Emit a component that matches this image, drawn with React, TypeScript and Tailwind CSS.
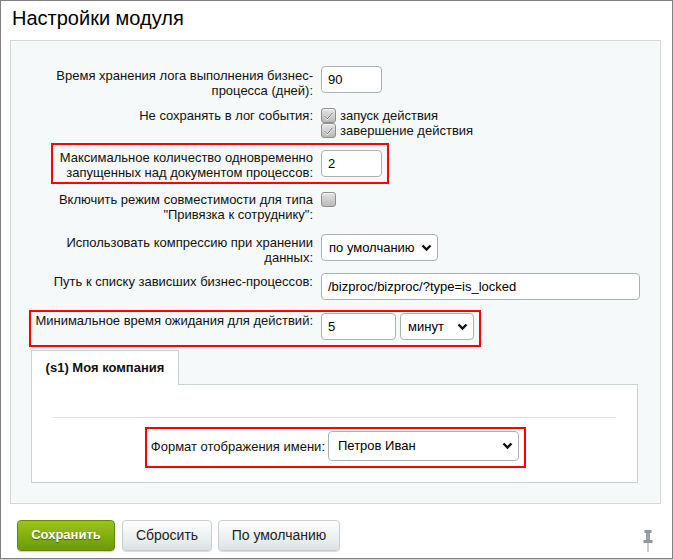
import React from "react";

const font = "font-['Liberation_Sans',Arial,sans-serif]";

function Chevron() {
  return (
    <svg width="11" height="8" viewBox="0 0 11 8" className="shrink-0">
      <path d="M1.5 1.5 L5.5 5.5 L9.5 1.5" fill="none" stroke="#111" strokeWidth="2.4" />
    </svg>
  );
}

function Checkbox({ checked }: { checked?: boolean }) {
  return (
    <span className="flex h-[15px] w-[15px] items-center justify-center rounded-[3px] border border-[#8f8f8f] bg-gradient-to-b from-[#e6e6e6] to-[#b9b9b9] shadow-[inset_0_1px_0_#f4f4f4]">
      {checked && (
        <svg width="11" height="10" viewBox="0 0 11 10">
          <path d="M1.5 5 L4.3 7.8 L9.5 1.8" fill="none" stroke="#f8f8f8" strokeWidth="2" />
          <path d="M1.5 5 L4.3 7.8 L9.5 1.8" fill="none" stroke="#5f5f5f" strokeWidth="1" />
        </svg>
      )}
    </span>
  );
}

function Input({ value, w }: { value: string; w: string }) {
  return (
    <div
      className={`${w} flex h-[27px] items-center rounded-[4px] border border-[#a9b3b6] bg-white pl-[6px] text-[13px] text-black`}
    >
      {value}
    </div>
  );
}

function Select({ value, w, h = "h-[27px]", pl = "pl-[7px]" }: { value: string; w: string; h?: string; pl?: string }) {
  return (
    <div
      className={`${w} ${h} ${pl} flex items-center justify-between rounded-[4px] border border-[#a9b3b6] bg-white pr-[5px] text-[13px] text-black`}
    >
      <span>{value}</span>
      <Chevron />
    </div>
  );
}

function Row({
  label,
  pt = "pt-0",
  mt,
  children,
}: {
  label: React.ReactNode;
  pt?: string;
  mt: string;
  children: React.ReactNode;
}) {
  return (
    <div className={`flex items-start ${mt}`}>
      <div className={`w-[284px] text-right text-[13px] leading-[15px] text-[#111] ${pt}`}>{label}</div>
      <div className="ml-[8px]">{children}</div>
    </div>
  );
}

function Pin() {
  return (
    <svg width="10" height="22" viewBox="0 0 10 22">
      <rect x="1.5" y="0" width="7" height="3" fill="#8e999c" />
      <rect x="3" y="3" width="4" height="7" fill="#9aa4a7" />
      <rect x="0.5" y="10" width="9" height="3" fill="#8e999c" />
      <rect x="4.5" y="13" width="1" height="9" fill="#8e999c" />
    </svg>
  );
}

export default function App() {
  return (
    <div className={`relative h-[559px] w-[673px] overflow-hidden border border-[#808080] bg-white ${font}`}>
      <div className="h-[39px] pl-[11px] pt-[5px] text-[20px] leading-[24px] text-black">Настройки модуля</div>

      <div className="ml-[9px] h-[464px] w-[651px] border border-[#d2d9db] bg-[#f5f9f9] pl-[18px] pt-[25px]">
        <Row
          mt="mt-0"
          pt="pt-[2px]"
          label={
            <>
              Время хранения лога выполнения бизнес-
              <br />
              процесса (дней):
            </>
          }
        >
          <Input value="90" w="w-[61px]" />
        </Row>

        <Row mt="mt-[10px]" label="Не сохранять в лог события:">
          <div className="flex flex-col text-[13px] leading-[15px] text-[#111]">
            <label className="flex h-[15px] items-center gap-[4px]">
              <Checkbox checked />
              запуск действия
            </label>
            <label className="flex h-[15px] items-center gap-[4px]">
              <Checkbox checked />
              завершение действия
            </label>
          </div>
        </Row>

        <Row
          mt="mt-[12px]"
          label={
            <>
              Максимальное количество одновременно
              <br />
              запущенных над документом процессов:
            </>
          }
        >
          <Input value="2" w="w-[61px]" />
        </Row>

        <Row
          mt="mt-[12px]"
          label={
            <>
              Включить режим совместимости для типа
              <br />
              "Привязка к сотруднику":
            </>
          }
        >
          <div className="flex h-[15px] items-center">
            <Checkbox />
          </div>
        </Row>

        <Row
          mt="mt-[12px]"
          pt="pt-[1px]"
          label={
            <>
              Использовать компрессию при хранении
              <br />
              данных:
            </>
          }
        >
          <Select value="по умолчанию" w="w-[117px]" />
        </Row>

        <Row mt="mt-[8px]" pt="pt-[1px]" label="Путь к списку зависших бизнес-процессов:">
          <Input value="/bizproc/bizproc/?type=is_locked" w="w-[319px]" />
        </Row>

        <Row mt="mt-[13px]" label={<span className="whitespace-nowrap">Минимальное время ожидания для действий:</span>}>
          <div className="flex gap-[4px]">
            <Input value="5" w="w-[75px]" />
            <Select value="минут" w="w-[74px]" />
          </div>
        </Row>

        <div className="ml-[2px] mt-[10px] w-[607px]">
          <div className="relative z-10 -mb-px flex h-[35px] w-[148px] items-center justify-center border border-b-0 border-[#c9d1d4] bg-white text-[13px] font-bold text-[#111]">
            (s1) Моя компания
          </div>
          <div className="h-[99px] border border-[#c9d1d4] bg-white pt-[32px]">
            <div className="ml-[21px] h-px w-[563px] bg-[#dde2e3]" />
            <div className="mt-[13px] flex items-center">
              <div className="w-[293px] text-right text-[13px] leading-[15px] text-[#111]">Формат отображения имени:</div>
              <div className="ml-[3px]">
                <Select value="Петров Иван" w="w-[191px]" h="h-[30px]" pl="pl-[9px]" />
              </div>
            </div>
          </div>
        </div>
      </div>

      <div className="flex items-center pl-[16px] pt-[14px]">
        <button
          type="button"
          className="h-[31px] w-[98px] rounded-[4px] border border-[#5f8a06] bg-gradient-to-b from-[#9dc41a] to-[#6c9a07] text-[13px] font-bold text-white [text-shadow:0_1px_1px_rgba(0,0,0,0.45)] shadow-[0_1px_1px_rgba(0,0,0,0.2)]"
        >
          Сохранить
        </button>
        <button
          type="button"
          className="ml-[7px] h-[31px] w-[90px] rounded-[4px] border border-[#c5ced1] bg-gradient-to-b from-white to-[#dce3e5] text-[14px] text-[#222] shadow-[0_1px_1px_rgba(0,0,0,0.15)]"
        >
          Сбросить
        </button>
        <button
          type="button"
          className="ml-[6px] h-[31px] w-[122px] rounded-[4px] border border-[#c5ced1] bg-gradient-to-b from-white to-[#dce3e5] text-[14px] text-[#222] shadow-[0_1px_1px_rgba(0,0,0,0.15)]"
        >
          По умолчанию
        </button>
        <div className="ml-auto mr-[19px] mt-[12px]">
          <Pin />
        </div>
      </div>

      <div className="pointer-events-none absolute left-[50px] top-[142px] h-[41px] w-[338px] border-2 border-[#f00]" />
      <div className="pointer-events-none absolute left-[28px] top-[309px] h-[37px] w-[452px] border-2 border-[#f00]" />
      <div className="pointer-events-none absolute left-[144px] top-[426px] h-[41px] w-[381px] border-2 border-[#f00]" />
    </div>
  );
}
